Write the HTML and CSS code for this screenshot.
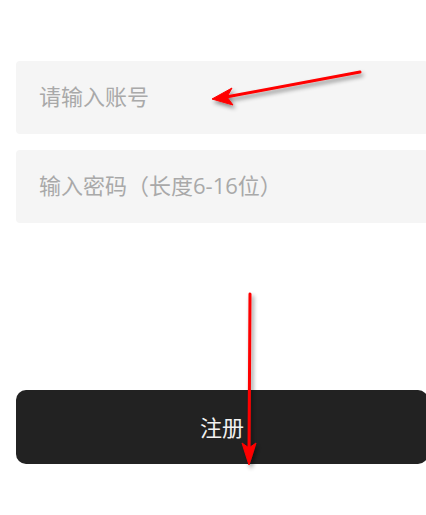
FILE: index.html
```html
<!DOCTYPE html>
<html lang="zh-CN">
<head>
  <meta charset="UTF-8">
  <meta name="viewport" content="width=device-width, initial-scale=1.0">
  <title>注册</title>
  <link rel="stylesheet" href="styles.css">
</head>
<body>
  <form class="register">
    <input class="field" type="text" placeholder="请输入账号">
    <input class="field" type="password" placeholder="输入密码（长度6-16位）">
    <button class="submit" type="button">注册</button>
  </form>

  <!-- annotation arrows drawn over the form -->
  <svg class="marks" width="426" height="515" viewBox="0 0 426 515">
    <defs>
      <filter id="shade" x="-20%" y="-20%" width="140%" height="140%">
        <feDropShadow dx="2" dy="3" stdDeviation="2" flood-color="#000" flood-opacity="0.45"/>
      </filter>
    </defs>
    <g filter="url(#shade)" fill="#f00" stroke="#f00">
      <line x1="360" y1="72" x2="226" y2="97" stroke-width="3" stroke-linecap="round"/>
      <polygon points="212,99 232,88 227,97 233,105" stroke-width="1" stroke-linejoin="round"/>
      <line x1="250" y1="294" x2="249" y2="452" stroke-width="3" stroke-linecap="round"/>
      <polygon points="249,465 242,443 249,448 256,443" stroke-width="1" stroke-linejoin="round"/>
    </g>
  </svg>
</body>
</html>
```

FILE: styles.css
```css
html, body {
  margin: 0;
  height: 100%;
  overflow: hidden;
  background: #fff;
}
body {
  position: relative;
  font-family: "Open Sans", "Noto Sans CJK SC", sans-serif;
}
.register {
  display: flex;
  flex-direction: column;
  width: 412px;
  padding: 61px 0 0 16px;
}
.field,
.submit {
  box-sizing: border-box;
  border: none;
  font-family: inherit;
  font-size: 22px;
  outline: none;
}
.field {
  height: 73px;
  border-radius: 4px;
  background: #f5f5f5;
  padding: 0 23px 4px;
  color: #333;
  margin-bottom: 16px;
}
.field::placeholder {
  color: #a9a9a9;
}
.submit {
  margin-top: 151px;
  height: 74px;
  padding: 0 0 3px;
  border-radius: 10px;
  background: #222;
  color: #f2f2f2;
}
.marks {
  position: absolute;
  top: 0;
  left: 0;
  pointer-events: none;
}
```
